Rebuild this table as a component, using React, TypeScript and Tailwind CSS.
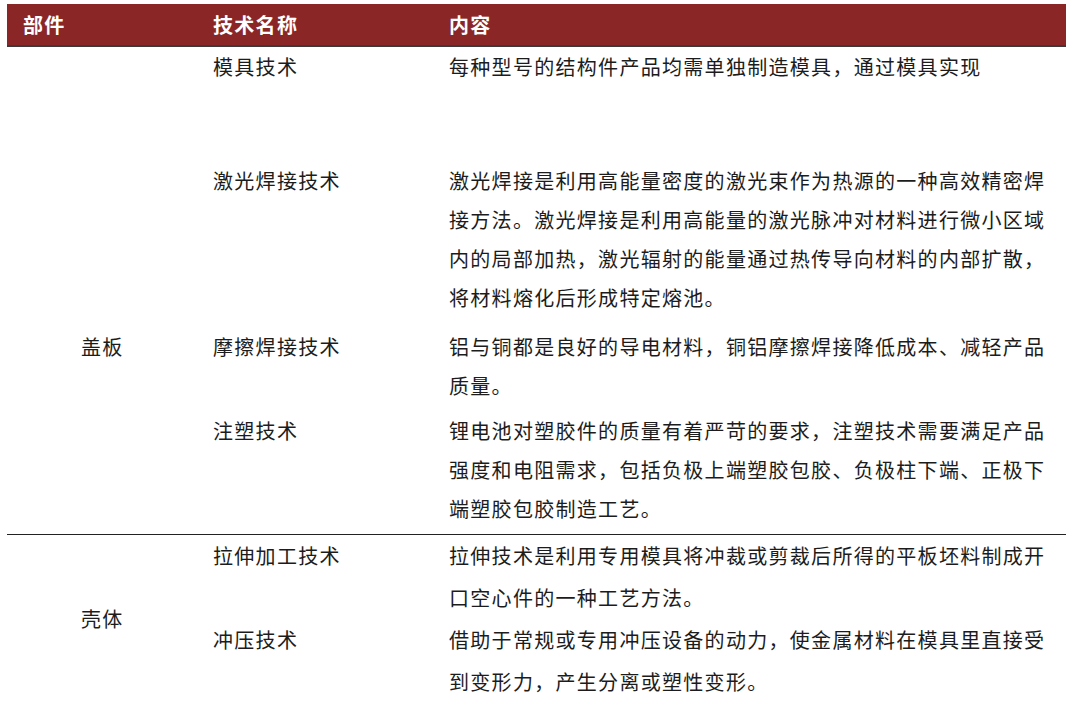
const font = {
  fontFamily: '"Noto Sans CJK SC", "Noto Sans", sans-serif',
};

interface Entry {
  name: string;
  content: string;
  className?: string;
}

const groupA: Entry[] = [
  {
    name: "模具技术",
    content: "每种型号的结构件产品均需单独制造模具，通过模具实现",
    className: "min-h-[114px]",
  },
  {
    name: "激光焊接技术",
    content:
      "激光焊接是利用高能量密度的激光束作为热源的一种高效精密焊接方法。激光焊接是利用高能量的激光脉冲对材料进行微小区域内的局部加热，激光辐射的能量通过热传导向材料的内部扩散，将材料熔化后形成特定熔池。",
    className: "mb-[10px]",
  },
  {
    name: "摩擦焊接技术",
    content: "铝与铜都是良好的导电材料，铜铝摩擦焊接降低成本、减轻产品质量。",
    className: "mb-[6px]",
  },
  {
    name: "注塑技术",
    content:
      "锂电池对塑胶件的质量有着严苛的要求，注塑技术需要满足产品强度和电阻需求，包括负极上端塑胶包胶、负极柱下端、正极下端塑胶包胶制造工艺。",
  },
];

const groupB: Entry[] = [
  {
    name: "拉伸加工技术",
    content: "拉伸技术是利用专用模具将冲裁或剪裁后所得的平板坯料制成开口空心件的一种工艺方法。",
  },
  {
    name: "冲压技术",
    content: "借助于常规或专用冲压设备的动力，使金属材料在模具里直接受到变形力，产生分离或塑性变形。",
  },
];

const Row = ({ entry, leading }: { entry: Entry; leading: string }) => (
  <div className={`flex ${entry.className ?? ""}`}>
    <div className={`w-[228px] shrink-0 pl-[20px] ${leading}`}>{entry.name}</div>
    <div className={`w-[645px] pl-[28px] ${leading}`}>
      <p className="w-[604px]">{entry.content}</p>
    </div>
  </div>
);

export default function App() {
  return (
    <div className="min-h-[704px] bg-white px-[7px] pt-[4px] text-[#1c1c1c]" style={font}>
      <div className="w-[1059px] text-[20px] tracking-[1.3px]">
        {/* header */}
        <div className="flex h-[43px] items-center border-b-2 border-[#3a3a3a] bg-[#8b2627] font-bold text-white">
          <div className="w-[186px] pl-[16px]">部件</div>
          <div className="w-[228px] pl-[20px]">技术名称</div>
          <div className="pl-[28px]">内容</div>
        </div>

        {/* 盖板 */}
        <div className="flex border-b border-[#222] pb-[6px]">
          <div className="w-[186px] shrink-0 pl-[74px] pt-[280px] leading-[39px]">盖板</div>
          <div className="flex flex-col">
            {groupA.map((e) => (
              <Row key={e.name} entry={e} leading="leading-[39px]" />
            ))}
          </div>
        </div>

        {/* 壳体 */}
        <div className="flex">
          <div className="flex w-[186px] shrink-0 items-center pl-[74px]">壳体</div>
          <div className="flex flex-col">
            {groupB.map((e) => (
              <Row key={e.name} entry={e} leading="leading-[42px]" />
            ))}
          </div>
        </div>
      </div>
    </div>
  );
}
